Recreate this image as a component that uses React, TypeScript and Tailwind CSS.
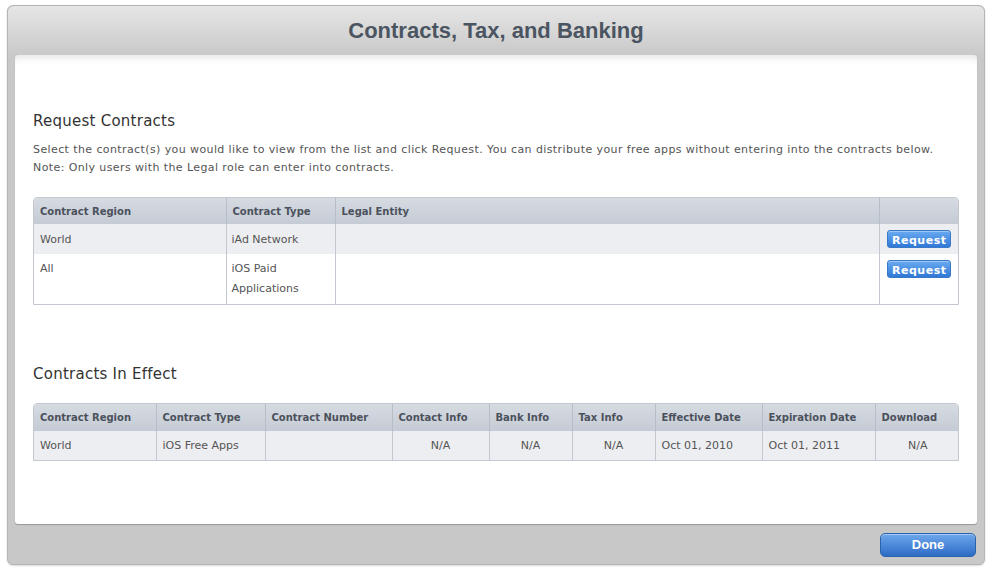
import React from "react";

const font = "font-['DejaVu_Sans',sans-serif]";

type Col = { label: string; w: string; center?: boolean };

const effectCols: Col[] = [
  { label: "Contract Region", w: "w-[122px]" },
  { label: "Contract Type", w: "w-[109px]" },
  { label: "Contract Number", w: "w-[127px]" },
  { label: "Contact Info", w: "w-[97px]", center: true },
  { label: "Bank Info", w: "w-[83px]", center: true },
  { label: "Tax Info", w: "w-[83px]", center: true },
  { label: "Effective Date", w: "w-[107px]" },
  { label: "Expiration Date", w: "w-[113px]" },
  { label: "Download", w: "w-[85px]", center: true },
];

const effectRow = ["World", "iOS Free Apps", "", "N/A", "N/A", "N/A", "Oct 01, 2010", "Oct 01, 2011", "N/A"];

const RequestButton = () => (
  <button className="h-[18px] w-[64px] rounded-[3px] border border-[#3a78c8] bg-gradient-to-b from-[#6aaaf0] to-[#2f78d6] text-[11px] font-bold tracking-[0.5px] text-white shadow-[inset_0_1px_0_rgba(255,255,255,0.35)]">
    Request
  </button>
);

const HeaderCell = ({ children, w, last }: { children?: React.ReactNode; w: string; last?: boolean }) => (
  <th
    className={`${w} ${last ? "" : "border-r"} border-[#b7bec8] px-[6px] text-left align-middle text-[10px] font-bold text-[#4b515c]`}
  >
    {children}
  </th>
);

export default function App() {
  return (
    <div className={`h-[570px] w-[992px] bg-white pt-[5px] pl-[7px] ${font}`}>
      <div className="flex h-[560px] w-[978px] flex-col rounded-[6px] border border-[#b4b4b4] bg-[#c8c8c8] shadow-[0_1px_2px_rgba(0,0,0,0.15)]">
        {/* title bar */}
        <div className="flex h-[49px] shrink-0 items-center justify-center rounded-t-[6px] bg-gradient-to-b from-[#e6e6e6] to-[#c9c9c9]">
          <h1 className="font-['Liberation_Sans',Arial,sans-serif] text-[22px] font-bold text-[#4b5561]">
            Contracts, Tax, and Banking
          </h1>
        </div>

        {/* panel */}
        <div className="mx-[7px] h-[469px] rounded-[3px] bg-white px-[18px] pt-[55px] shadow-[inset_0_8px_8px_-6px_rgba(0,0,0,0.12),0_1px_1px_rgba(0,0,0,0.25)]">
          <h2 className="text-[15px] leading-[22px] tracking-[0.25px] text-[#333]">Request Contracts</h2>
          <p className="mt-[9px] text-[11px] leading-[18px] tracking-[0.4px] text-[#555]">
            Select the contract(s) you would like to view from the list and click Request. You can distribute your free
            apps without entering into the contracts below.
            <br />
            Note: Only users with the Legal role can enter into contracts.
          </p>

          <div className="mt-[20px] overflow-hidden rounded-t-[4px] border border-[#c3c8d0]">
            <table className="w-full table-fixed border-collapse">
              <thead>
                <tr className="h-[26px] bg-gradient-to-b from-[#d6dbe2] to-[#c5cbd4]">
                  <HeaderCell w="w-[192px]">Contract Region</HeaderCell>
                  <HeaderCell w="w-[109px]">Contract Type</HeaderCell>
                  <HeaderCell w="w-[544px]">Legal Entity</HeaderCell>
                  <HeaderCell w="w-[81px]" last />
                </tr>
              </thead>
              <tbody className="text-[11px] leading-[20px] text-[#555]">
                <tr className="h-[30px] bg-[#edeef1]">
                  <td className="border-r border-[#c3c8d0] px-[6px] align-top pt-[6px]">World</td>
                  <td className="border-r border-[#c3c8d0] px-[5px] align-top pt-[6px]">iAd Network</td>
                  <td className="border-r border-[#c3c8d0]"></td>
                  <td className="align-top pt-[6px] pr-[1px] text-center">
                    <RequestButton />
                  </td>
                </tr>
                <tr className="h-[50px] bg-white">
                  <td className="border-r border-[#c3c8d0] px-[6px] align-top pt-[5px]">All</td>
                  <td className="border-r border-[#c3c8d0] px-[5px] align-top pt-[5px]">
                    iOS Paid
                    <br />
                    Applications
                  </td>
                  <td className="border-r border-[#c3c8d0]"></td>
                  <td className="align-top pt-[6px] pr-[1px] text-center">
                    <RequestButton />
                  </td>
                </tr>
              </tbody>
            </table>
          </div>

          <h2 className="mt-[58px] text-[15px] leading-[22px] tracking-[0.25px] text-[#333]">Contracts In Effect</h2>

          <div className="mt-[18px] overflow-hidden rounded-t-[4px] border border-[#c3c8d0]">
            <table className="w-full table-fixed border-collapse">
              <thead>
                <tr className="h-[27px] bg-gradient-to-b from-[#d6dbe2] to-[#c5cbd4]">
                  {effectCols.map((c, i) => (
                    <HeaderCell key={c.label} w={c.w} last={i === effectCols.length - 1}>
                      {c.label}
                    </HeaderCell>
                  ))}
                </tr>
              </thead>
              <tbody className="text-[11px] text-[#555]">
                <tr className="h-[29px] bg-[#edeef1]">
                  {effectRow.map((v, i) => (
                    <td
                      key={i}
                      className={`${i === effectRow.length - 1 ? "" : "border-r"} border-[#c3c8d0] px-[6px] pt-[2px] align-middle ${
                        effectCols[i].center ? "text-center" : "text-left"
                      }`}
                    >
                      {v}
                    </td>
                  ))}
                </tr>
              </tbody>
            </table>
          </div>
        </div>

        {/* footer */}
        <div className="flex flex-1 items-center justify-end px-[8px] pt-[2px]">
          <button className="h-[24px] w-[96px] rounded-[5px] border border-[#2b62ad] bg-gradient-to-b from-[#6ea7ec] to-[#2d6cc6] font-['Liberation_Sans',Arial,sans-serif] text-[13px] font-bold text-white shadow-[inset_0_1px_0_rgba(255,255,255,0.4)]">
            Done
          </button>
        </div>
      </div>
    </div>
  );
}
